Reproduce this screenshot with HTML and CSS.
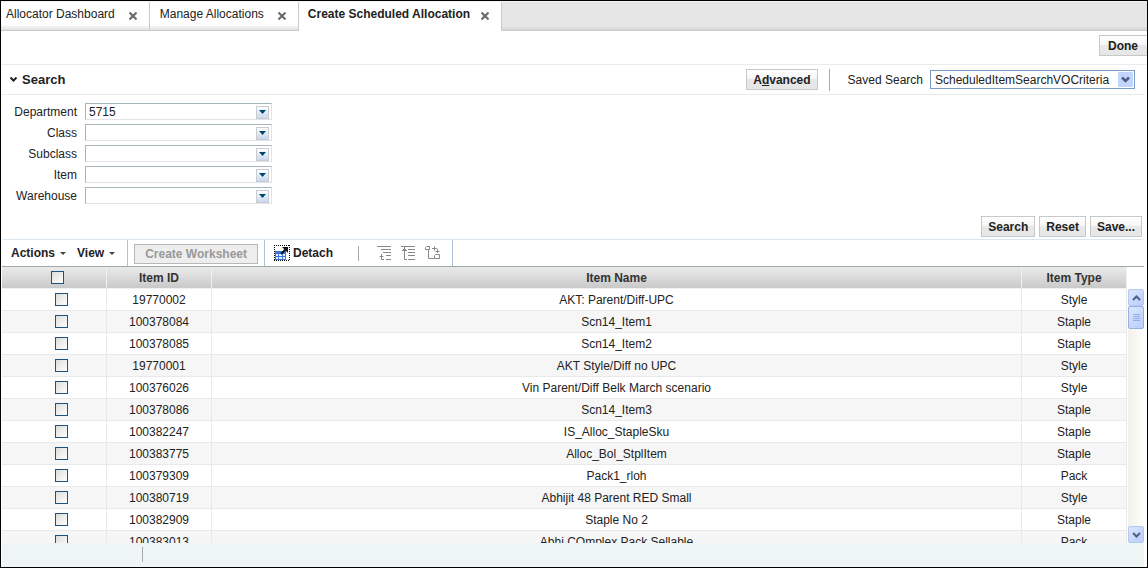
FILE: index.html
```html
<!DOCTYPE html>
<html lang="en">
<head>
<meta charset="utf-8">
<title>Create Scheduled Allocation</title>
<link rel="stylesheet" href="styles.css">
</head>
<body>
<div class="app">
  <nav class="tabs">
    <div class="tab first"><a href="#">Allocator Dashboard</a><button class="close" aria-label="Close Allocator Dashboard"><svg width="8" height="8" viewBox="0 0 8 8"><path d="M.5 .5l7 7M7.500 .5l-7 7"/></svg></button></div>
    <div class="tab"><a href="#">Manage Allocations</a><button class="close" aria-label="Close Manage Allocations"><svg width="8" height="8" viewBox="0 0 8 8"><path d="M.5 .5l7 7M7.500 .5l-7 7"/></svg></button></div>
    <div class="tab active"><a href="#">Create Scheduled Allocation</a><button class="close" aria-label="Close Create Scheduled Allocation"><svg width="8" height="8" viewBox="0 0 8 8"><path d="M.5 .5l7 7M7.500 .5l-7 7"/></svg></button></div>
  </nav>
  <div class="done-row"><button class="btn done">Done</button></div>

  <section class="search">
    <header class="search-head">
      <svg class="disclose" width="7" height="5" viewBox="0 0 7 5"><path d="M0.5 0.5l3 3l3-3"/></svg>
      <h1>Search</h1>
      <button class="btn advanced">A<u>d</u>vanced</button>
      <span class="rule"></span>
      <label for="saved">Saved Search</label>
      <span class="saved-box">
        <select id="saved"><option>ScheduledItemSearchVOCriteria</option></select>
        <svg class="saved-arrow" width="15" height="15" viewBox="0 0 15 15"><rect width="15" height="15" rx="1" fill="#c3d5fd"/><path d="M4 5.500l3.500 3.500l3.500-3.500" fill="none" stroke="#4d6185" stroke-width="2.500"/></svg>
      </span>
    </header>
    <form class="criteria">
      <label for="dept">Department</label>
      <span class="combo"><input id="dept" type="text" value="5715"><button type="button" aria-label="Department list"><svg width="7" height="4" viewBox="0 0 7 4"><path d="M0 0h7L3.500 4z"/></svg></button></span>
      <label for="class">Class</label>
      <span class="combo"><input id="class" type="text"><button type="button" aria-label="Class list"><svg width="7" height="4" viewBox="0 0 7 4"><path d="M0 0h7L3.500 4z"/></svg></button></span>
      <label for="sub">Subclass</label>
      <span class="combo"><input id="sub" type="text"><button type="button" aria-label="Subclass list"><svg width="7" height="4" viewBox="0 0 7 4"><path d="M0 0h7L3.500 4z"/></svg></button></span>
      <label for="item">Item</label>
      <span class="combo"><input id="item" type="text"><button type="button" aria-label="Item list"><svg width="7" height="4" viewBox="0 0 7 4"><path d="M0 0h7L3.500 4z"/></svg></button></span>
      <label for="wh">Warehouse</label>
      <span class="combo"><input id="wh" type="text"><button type="button" aria-label="Warehouse list"><svg width="7" height="4" viewBox="0 0 7 4"><path d="M0 0h7L3.500 4z"/></svg></button></span>
    </form>
    <div class="search-actions">
      <button class="btn">Search</button>
      <button class="btn">Reset</button>
      <button class="btn">Save...</button>
    </div>
  </section>

  <div class="toolbar">
    <div class="group menus">
      <button class="menu">Actions<svg width="6" height="3" viewBox="0 0 6 3"><path d="M0 0h6L3 3z"/></svg></button>
      <button class="menu">View<svg width="6" height="3" viewBox="0 0 6 3"><path d="M0 0h6L3 3z"/></svg></button>
    </div>
    <div class="group worksheet"><button class="btn" disabled>Create Worksheet</button></div>
    <div class="group tools">
      <button class="detach"><svg width="16" height="16" viewBox="0 0 16 16"><path d="M0 .5h16M0 15.500h16M.5 0v16M15.500 0v16" stroke="#000" stroke-dasharray="1 1"/><rect x="1" y="6" width="11" height="9" fill="#3c78dc"/><path d="M2 9h2v2H2zM5 9h3v2H5zM9 9h2v2H9zM2 12h2v2H2zM5 12h3v2H5zM9 12h2v2H9z" fill="#e6f0ff"/><path d="M7 9l5-5" stroke="#111" stroke-width="1.800"/><path d="M8 2h6v6z" fill="#111"/></svg>Detach</button>
      <span class="mini-rule"></span>
      <button class="icon" aria-label="Go up"><svg width="16" height="16" viewBox="0 0 16 16"><path d="M0 1.500h14M4 4.500h10M6 7.500h8M9 10.500h5M9 14.500h5M4.500 9v5.500H7M2.500 11.500h4"/></svg></button>
      <button class="icon" aria-label="Go to top"><svg width="16" height="16" viewBox="0 0 16 16"><path d="M0 1.500h14M7 4.500h7M7 7.500h7M7 10.500h7M7 14.500h7M3.500 2v12.500H6M1 5.500h5M2 4.500h3"/></svg></button>
      <button class="icon" aria-label="Show as top"><svg width="16" height="16" viewBox="0 0 16 16"><path d="M.5 2.500l1-1h3v3h-4zM3.500 5v8.500H9M9.500 10.500l1-1h4v4h-5zM7 3.500h4.500q1 0 1 1V8M9.500 1.500v4M10.500 6.500h4"/></svg></button>
    </div>
  </div>

  <div class="results">
    <div class="table-wrap">
      <table>
        <colgroup><col class="c-side"><col class="c-side"><col><col class="c-side"></colgroup>
        <thead><tr><th class="pick"><input type="checkbox" aria-label="Select all"></th><th>Item ID</th><th>Item Name</th><th>Item Type</th></tr></thead>
        <tbody>
          <tr><td class="pick"><input type="checkbox" aria-label="Select 19770002"></td><td>19770002</td><td>AKT: Parent/Diff-UPC</td><td>Style</td></tr>
          <tr><td class="pick"><input type="checkbox" aria-label="Select 100378084"></td><td>100378084</td><td>Scn14_Item1</td><td>Staple</td></tr>
          <tr><td class="pick"><input type="checkbox" aria-label="Select 100378085"></td><td>100378085</td><td>Scn14_Item2</td><td>Staple</td></tr>
          <tr><td class="pick"><input type="checkbox" aria-label="Select 19770001"></td><td>19770001</td><td>AKT Style/Diff no UPC</td><td>Style</td></tr>
          <tr><td class="pick"><input type="checkbox" aria-label="Select 100376026"></td><td>100376026</td><td>Vin Parent/Diff Belk March scenario</td><td>Style</td></tr>
          <tr><td class="pick"><input type="checkbox" aria-label="Select 100378086"></td><td>100378086</td><td>Scn14_Item3</td><td>Staple</td></tr>
          <tr><td class="pick"><input type="checkbox" aria-label="Select 100382247"></td><td>100382247</td><td>IS_Alloc_StapleSku</td><td>Staple</td></tr>
          <tr><td class="pick"><input type="checkbox" aria-label="Select 100383775"></td><td>100383775</td><td>Alloc_Bol_StplItem</td><td>Staple</td></tr>
          <tr><td class="pick"><input type="checkbox" aria-label="Select 100379309"></td><td>100379309</td><td>Pack1_rloh</td><td>Pack</td></tr>
          <tr><td class="pick"><input type="checkbox" aria-label="Select 100380719"></td><td>100380719</td><td>Abhijit 48 Parent RED Small</td><td>Style</td></tr>
          <tr><td class="pick"><input type="checkbox" aria-label="Select 100382909"></td><td>100382909</td><td>Staple No 2</td><td>Staple</td></tr>
          <tr><td class="pick"><input type="checkbox" aria-label="Select 100383013"></td><td>100383013</td><td>Abhi COmplex Pack Sellable</td><td>Pack</td></tr>
        </tbody>
      </table>
    </div>
    <div class="scroll">
      <button class="sb" aria-label="Scroll up"><svg width="9" height="6" viewBox="0 0 9 6"><path d="M1 5l3.500-3.500L8 5"/></svg></button>
      <div class="thumb"><i></i><i></i><i></i><i></i></div>
      <button class="sb down" aria-label="Scroll down"><svg width="9" height="6" viewBox="0 0 9 6"><path d="M1 1l3.500 3.500L8 1"/></svg></button>
    </div>
  </div>
  <footer class="status"><span></span></footer>
</div>
</body>
</html>
```
FILE: styles.css
```css
* { box-sizing: border-box; }
html, body { height: 100%; margin: 0; }
body, button, input, select {
  font-family: "Liberation Sans", Arial, sans-serif;
  font-size: 12px;
  color: #222;
}
button { margin: 0; padding: 0; border: 0; background: none; }
svg { display: block; flex: none; }

.app {
  display: flex;
  flex-direction: column;
  height: 100%;
  overflow: hidden;
  border: 1px solid #000;
  background: #fff;
}

.tabs {
  display: flex;
  flex: none;
  height: 30px;
  border-top: 1px solid #f4f4f4;
  background: linear-gradient(#e6e6e6 25px, #dadada 26px, #dadada 28px, #c8c8c8 28px);
}
.tab {
  display: flex;
  align-items: flex-start;
  gap: 14px;
  padding: 5px 12px 0 10px;
  border-right: 1px solid #c8c8c8;
  border-bottom: 1px solid #c8c8c8;
  background: linear-gradient(#fff 23px, #f0f0f0 25px, #e2e2e2);
}
.tab.first { padding-left: 5px; }
.tab.active {
  gap: 11px;
  padding-left: 9px;
  border-bottom-color: #fff;
  background: #fff;
  font-weight: bold;
}
.tab a { color: #222; text-decoration: none; line-height: 14px; }
.close { padding-top: 5px; }
.close path { stroke: #666; stroke-width: 2; fill: none; }

.btn {
  height: 21px;
  padding: 0 6px;
  border: 1px solid #c8c8c8;
  background: linear-gradient(#fff, #f6f6f6 45%, #e8e8e8 50%, #e6e6e6);
  font-weight: bold;
  white-space: nowrap;
}
.done-row {
  display: flex;
  flex: none;
  justify-content: flex-end;
  height: 34px;
  padding-top: 4px;
  border-bottom: 1px solid #ebebeb;
}
.done { padding: 0 9px 0 8px; border-right: 0; }

.search {
  flex: none;
  margin-right: 2px;
  border-bottom: 1px solid #dce6ee;
  border-radius: 0 0 4px 4px;
}
.search-head {
  display: flex;
  align-items: center;
  height: 30px;
  padding-right: 10px;
  border-bottom: 1px solid #ebebeb;
}
.disclose { margin: 0 5px 0 9px; }
.disclose path { fill: none; stroke: #222; stroke-width: 2; }
h1 { margin: 0; font-size: 13px; }
.advanced { margin-left: auto; }
.rule { width: 1px; height: 22px; margin: 0 18px 0 11px; background: #aaa; }
.saved-box { position: relative; margin-left: 7px; }
.saved-box select {
  appearance: none;
  display: block;
  width: 205px;
  height: 19px;
  padding: 0 20px 0 4px;
  border: 1px solid #7a9cc6;
  border-radius: 0;
  background: #fff;
}
.saved-arrow { position: absolute; top: 2px; right: 2px; pointer-events: none; }

.criteria {
  display: grid;
  grid-template-columns: 76px 187px;
  grid-auto-rows: 17px;
  gap: 4px 8px;
  padding-top: 8px;
  align-items: center;
}
.criteria label { text-align: right; }
.combo {
  display: flex;
  align-items: center;
  height: 17px;
  padding: 1px 2px 0 0;
  border: 1px solid #e2e2ea;
  border-top-color: #a5b5b9;
  border-left-color: #a5b5b9;
  background: #fff;
}
.combo input {
  flex: 1;
  min-width: 0;
  height: 14px;
  padding: 0 3px;
  border: 0;
  outline: 0;
  background: none;
}
.combo button {
  display: grid;
  place-items: center;
  width: 13px;
  height: 13px;
  border: 1px solid #c8ccd0;
  background: linear-gradient(#fff, #c8d8ee);
}
.combo path { fill: #00456b; }
.search-actions {
  display: flex;
  justify-content: flex-end;
  gap: 4px;
  padding: 12px 3px 2px 0;
}

.toolbar { display: flex; flex: none; height: 26px; }
.group { display: flex; align-items: center; border-right: 1px solid #b0c0d4; }
.menus { gap: 11px; padding: 0 12px 0 10px; }
.menu { display: flex; align-items: center; gap: 5px; font-weight: bold; }
.menu path { fill: #444; }
.worksheet { padding: 2px 6px 0; }
.btn:disabled { height: 20px; padding: 0 10px; color: #999; background: #eee; border-color: #b8b8b8; }
.tools { padding: 0 11px 0 9px; }
.detach { display: flex; align-items: center; gap: 3px; font-weight: bold; }
.mini-rule { width: 1px; height: 15px; margin: 0 18px 0 25px; background: #aaa; }
.icon + .icon { margin-left: 8px; }
.icon path { fill: none; stroke: #888; }

.results {
  display: flex;
  flex: 1;
  min-height: 0;
  margin: 0 3px 0 1px;
  border-top: 1px solid #9eaaaa;
}
.table-wrap { flex: 1; overflow: hidden; }
table { width: 100%; table-layout: fixed; border-collapse: separate; border-spacing: 0; }
.c-side { width: 105px; }
th, td {
  height: 22px;
  padding: 0;
  border-right: 1px solid #e9e9e9;
  border-bottom: 1px solid #e9e9e9;
  text-align: center;
  line-height: 14px;
  white-space: nowrap;
}
th { color: #333; border-color: #f0f0f0; background: linear-gradient(#e9e9e9, #dedede 40%, #c9c9c9); }
tbody tr:nth-child(even) { background: #f6f6f6; }
.pick input {
  appearance: none;
  display: block;
  width: 13px;
  height: 13px;
  margin: 0 auto;
  border: 1px solid #1c5180;
  background: linear-gradient(135deg, #dcdcd7, #fff);
}
td.pick { padding-left: 14px; }
th.pick { padding-left: 6px; }

.scroll {
  display: flex;
  flex-direction: column;
  flex: none;
  width: 16px;
  margin: 22px 0 0 1px;
  background: linear-gradient(to right, #f3f1ec, #fefefb);
}
.sb, .thumb {
  display: grid;
  place-items: center;
  place-content: center;
  flex: none;
  height: 17px;
  border: 1px solid #b4c8f0;
  border-radius: 2px;
  background: linear-gradient(135deg, #dce6fe, #b8cdfa);
}
.sb path { fill: none; stroke: #4d6185; stroke-width: 2; }
.down { margin-top: auto; }
.thumb { height: 23px; gap: 1px; border-color: #98b1e4; }
.thumb i { width: 7px; height: 1px; background: #8cb0f8; }

.status {
  flex: none;
  height: 24px;
  margin: 0 3px 0 1px;
  padding: 4px 0 0 140px;
  background: #edf6f5;
}
.status span { display: block; width: 1px; height: 15px; background: #aaa; }
```
